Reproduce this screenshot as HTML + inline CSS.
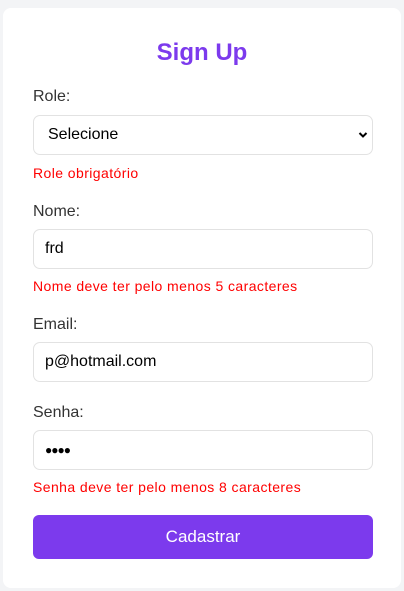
<!DOCTYPE html>
<html><head><meta charset="utf-8"><style>
body{margin:0;width:404px;height:591px;background:#f3f4f6;font-family:"Liberation Sans",sans-serif;position:relative;overflow:hidden}
.card{position:absolute;left:3px;top:8px;width:398px;height:580px;background:#fff;border-radius:8px}
.a{position:absolute;left:33px;white-space:nowrap}
h1{position:absolute;top:38px;left:0;width:404px;margin:0;text-align:center;color:#7c3aed;font-size:24px;font-weight:bold;line-height:30px}
.l{font-size:16px;color:#333;line-height:20px}
.e{font-size:14px;color:#ff0000;line-height:18px;letter-spacing:0.42px}
.i{width:338px;height:38px;border:1px solid #e2e2e2;border-radius:7px;background:#fff;font-size:16px;color:#000;line-height:38px;box-sizing:content-box}
.i span{padding-left:11px}
.btn{width:340px;height:44px;background:#7c3aed;border-radius:6px;color:#fff;font-size:17px;text-align:center;line-height:44px}
</style></head><body>
<div class="card"></div>
<h1>Sign Up</h1>
<div class="a l" style="top:87px">Role:</div>
<div class="a i" style="top:115px"><span style="padding-left:14px">Selecione</span>
<svg style="position:absolute;right:4px;top:15px" width="10" height="8" viewBox="0 0 10 8"><path d="M1.5 2 L5 5.5 L8.5 2" fill="none" stroke="#000" stroke-width="2"/></svg></div>
<div class="a e" style="top:164px">Role obrigatório</div>
<div class="a l" style="top:202px">Nome:</div>
<div class="a i" style="top:229px"><span>frd</span></div>
<div class="a e" style="top:277px">Nome deve ter pelo menos 5 caracteres</div>
<div class="a l" style="top:315px">Email:</div>
<div class="a i" style="top:342px"><span>p@hotmail.com</span></div>
<div class="a l" style="top:403px">Senha:</div>
<div class="a i" style="top:430px"><span style="font-size:12px;letter-spacing:-1px">●●●●</span></div>
<div class="a e" style="top:478px">Senha deve ter pelo menos 8 caracteres</div>
<div class="a btn" style="top:515px">Cadastrar</div>
</body></html>
